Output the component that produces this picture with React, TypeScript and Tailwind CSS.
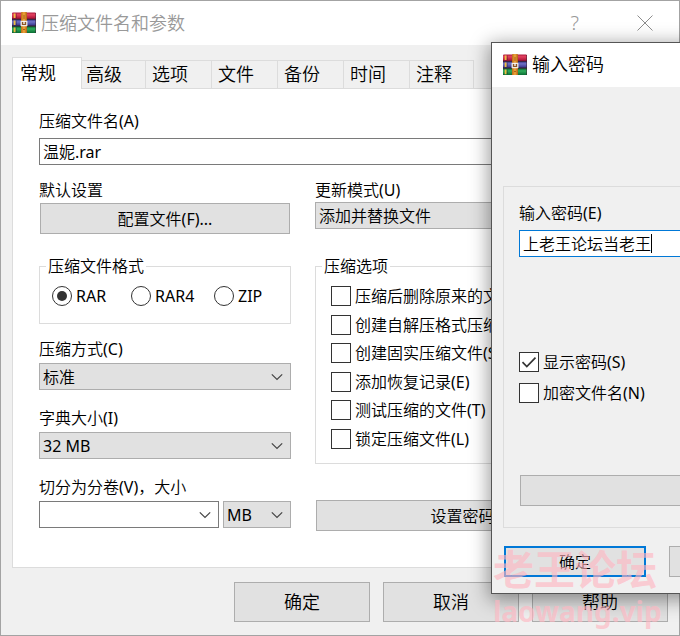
import React from 'react';

const ArchiveIcon: React.FC = () => (
  <svg className="h-[22px] w-6 shrink-0" viewBox="0 0 24 22" aria-hidden="true">
    <defs>
      <linearGradient id="red" x1="0" y1="0" x2="0" y2="1">
        <stop offset="0" stopColor="#b01c40" />
        <stop offset="0.35" stopColor="#e2405f" />
        <stop offset="1" stopColor="#a80f35" />
      </linearGradient>
      <linearGradient id="blue" x1="0" y1="0" x2="0" y2="1">
        <stop offset="0" stopColor="#3d3c8c" />
        <stop offset="0.35" stopColor="#6f72c6" />
        <stop offset="1" stopColor="#37368c" />
      </linearGradient>
      <linearGradient id="green" x1="0" y1="0" x2="0" y2="1">
        <stop offset="0" stopColor="#0d6a35" />
        <stop offset="0.35" stopColor="#2fae5c" />
        <stop offset="1" stopColor="#0a6c34" />
      </linearGradient>
      <linearGradient id="belt" x1="0" y1="0" x2="1" y2="0">
        <stop offset="0" stopColor="#bb6c18" />
        <stop offset="0.5" stopColor="#f0a63a" />
        <stop offset="1" stopColor="#b06114" />
      </linearGradient>
    </defs>
    <path d="M1 1h23v20H0V2z" fill="#3a2030" />
    <path d="M1 0.5h22.5v6.2H1Q0 6.7 0 5.7V1.5Q0 0.5 1 0.5z" fill="url(#red)" />
    <path d="M1 7.7h22.5v5.8H1Q0 13.5 0 12.5V8.7Q0 7.7 1 7.7z" fill="url(#blue)" />
    <path d="M1 14.6h22.5V21H1Q0 21 0 20v-4.4Q0 14.6 1 14.6z" fill="url(#green)" />
    <path d="M2.6 1.5v4.6M2.6 8.5V13M2.6 15.6v4.6" stroke="#f0bd3e" strokeWidth="1.8" />
    <path d="M4.4 1.5v4.6M4.4 8.5V13M4.4 15.6v4.6" stroke="#2a1420" strokeOpacity="0.5" strokeWidth="0.7" />
    <path d="M9 1.2Q9 0 10 0h4Q15 0 15 1.2V21H9z" fill="url(#belt)" />
    <path d="M9.2 9.4h5.6v4.2H9.2z" fill="#8c5526" stroke="#efece6" strokeWidth="1.3" strokeLinejoin="round" />
    <path d="M12 9v3" stroke="#ffffff" strokeWidth="1.3" />
    <path d="M11 4h2M11 6h2M11 17.5h2" stroke="#8c4a10" strokeWidth="0.7" />
  </svg>
);

const Chevron: React.FC = () => (
  <svg className="h-2 w-3" viewBox="0 0 12 8" fill="none" aria-hidden="true">
    <path d="M0.8 1.3 6 6.5l5.2-5.2" stroke="#444444" strokeWidth="1.2" />
  </svg>
);

interface SelectProps {
  id: string;
  value: string;
  className?: string;
}

const Select: React.FC<SelectProps> = ({ id, value, className = 'w-full' }) => (
  <div className={`relative ${className}`}>
    <select
      id={id}
      aria-label={value}
      className="block h-[27px] w-full appearance-none border border-[#adadad] bg-[#e1e1e1] pl-[3px] leading-6 outline-none"
    >
      <option>{value}</option>
    </select>
    <span className="pointer-events-none absolute inset-y-0 right-2 flex items-center">
      <Chevron />
    </span>
  </div>
);

interface CheckProps {
  label: string;
  checked?: boolean;
}

const CheckBox: React.FC<CheckProps> = ({ label, checked }) => (
  <label className="flex h-5 items-center gap-1 whitespace-nowrap">
    <span className="relative size-5 shrink-0">
      <input
        type="checkbox"
        defaultChecked={checked}
        className="peer block size-5 appearance-none border border-[#333333] bg-white"
      />
      <svg
        className="pointer-events-none absolute inset-0 hidden size-5 peer-checked:block"
        viewBox="0 0 20 20"
        fill="none"
        aria-hidden="true"
      >
        <path d="M3.5 10.2 7.8 14.5 16.5 5.6" stroke="#333333" strokeWidth="1.7" />
      </svg>
    </span>
    {label}
  </label>
);

const Radio: React.FC<CheckProps> = ({ label, checked }) => (
  <label className="flex h-5 items-center gap-1">
    <input
      type="radio"
      name="format"
      defaultChecked={checked}
      className="flex size-5 shrink-0 appearance-none items-center justify-center rounded-full border border-[#333333] bg-white before:size-2.5 before:rounded-full checked:before:bg-[#333333]"
    />
    {label}
  </label>
);

const tabs = ['高级', '选项', '文件', '备份', '时间', '注释'];

const archiveOptions = [
  '压缩后删除原来的文件(D)',
  '创建自解压格式压缩文件(X)',
  '创建固实压缩文件(S)',
  '添加恢复记录(E)',
  '测试压缩的文件(T)',
  '锁定压缩文件(L)',
];

const GeneralPanel: React.FC = () => (
  <div className="border border-[#dcdcdc] bg-white px-[26px] pt-5 pb-9">
    <label htmlFor="name" className="block">压缩文件名(A)</label>
    <input
      id="name"
      defaultValue="温妮.rar"
      className="mt-[5px] block h-[27px] w-full border border-[#7a7a7a] bg-white pb-0.5 pl-[3px] outline-none"
    />

    <div className="mt-[13px] grid grid-cols-[252px_1fr] gap-x-6">
      <div className="flex flex-col">
        <span>默认设置</span>
        <button className="mx-px mt-px h-[31px] border border-[#adadad] bg-[#e1e1e1]">配置文件(F)...</button>

        <fieldset className="mt-5 h-[70px] border border-[#dcdcdc]">
          <legend className="ml-1.5 px-0.5">压缩文件格式</legend>
          <div className="grid grid-cols-[79px_83px_auto] pt-2 pl-3">
            <Radio label="RAR" checked />
            <Radio label="RAR4" />
            <Radio label="ZIP" />
          </div>
        </fieldset>

        <div className="mt-[13px] flex flex-col gap-4">
          <div className="flex flex-col gap-0.5">
            <label htmlFor="method">压缩方式(C)</label>
            <Select id="method" value="标准" />
          </div>
          <div className="flex flex-col gap-0.5">
            <label htmlFor="dictionary">字典大小(I)</label>
            <Select id="dictionary" value="32 MB" />
          </div>
          <div className="flex flex-col gap-0.5">
            <label htmlFor="volume">切分为分卷(V)，大小</label>
            <div className="flex gap-1">
              <div className="flex h-[27px] flex-1 items-center border border-[#7a7a7a] bg-white">
                <input id="volume" className="h-full w-full min-w-0 pl-[3px] outline-none" />
                <button aria-label="展开" className="px-[7px]"><Chevron /></button>
              </div>
              <Select id="unit" value="MB" className="w-[68px]" />
            </div>
          </div>
        </div>
      </div>

      <div className="flex flex-col">
        <label htmlFor="update">更新模式(U)</label>
        <Select id="update" value="添加并替换文件" />

        <fieldset className="mt-[25px] h-[210px] min-w-0 border border-[#dcdcdc]">
          <legend className="ml-1.5 px-0.5">压缩选项</legend>
          <div className="flex h-[171px] flex-col justify-between pt-2 pl-[15px]">
            {archiveOptions.map((option) => (
              <CheckBox key={option} label={option} />
            ))}
          </div>
        </fieldset>

        <button className="mt-9 ml-px h-[31px] border border-[#adadad] bg-[#e1e1e1]">设置密码(P)...</button>
      </div>
    </div>
  </div>
);

const PasswordDialog: React.FC = () => (
  <div
    role="dialog"
    aria-label="输入密码"
    className="absolute top-[42px] left-[491px] w-[498px] border border-[#555555] bg-[#f0f0f0] shadow-[0_4px_18px_2px_rgba(0,0,0,0.4)]"
  >
    <div className="flex h-11 items-center gap-[5px] bg-white pl-[11px] text-lg">
      <ArchiveIcon />
      <h2 className="pb-0.5">输入密码</h2>
    </div>
    <div className="px-[11px] pt-[99px] pb-4">
      <div className="flex flex-col border border-[#dcdcdc] pt-3.5 pr-4 pb-[21px] pl-[15px]">
        <label htmlFor="password">输入密码(E)</label>
        <div className="mt-[5px] flex h-[27px] items-center border border-[#0078d7] bg-white pl-[3px]">
          <input id="password" defaultValue="上老王论坛当老王" className="h-full w-[8em] pb-0.5 outline-none" />
          <span className="h-[19px] w-px bg-black" />
        </div>
        <div className="mt-[95px] flex flex-col gap-[11px]">
          <CheckBox label="显示密码(S)" checked />
          <CheckBox label="加密文件名(N)" />
        </div>
        <button aria-label="整理密码" className="mt-[72px] ml-px h-[31px] border border-[#adadad] bg-[#e1e1e1]" />
      </div>
      <div className="mt-[18px] flex gap-[23px] pl-px">
        <button className="h-[31px] w-[142px] border-2 border-[#0078d7] bg-[#e1e1e1]">确定</button>
        <button aria-label="取消" className="h-[31px] w-[142px] border border-[#adadad] bg-[#e1e1e1]" />
      </div>
    </div>
  </div>
);

const App: React.FC = () => {
  return (
    <div className="relative min-h-screen overflow-hidden bg-[#f0f0f0] font-['Noto_Sans','Noto_Sans_CJK_SC_DemiLight','Noto_Sans_CJK_SC',sans-serif] text-base leading-6 text-black">
      <div className="flex min-h-screen flex-col border border-[#a3a3a3]">
        <header className="flex h-11 items-center gap-[5px] bg-white pr-[26px] pl-[11px] text-lg text-[#999999]">
          <ArchiveIcon />
          <h1 className="flex-1">压缩文件名和参数</h1>
          <button aria-label="帮助" className="mr-[53px] text-xl font-light">?</button>
          <button aria-label="关闭">
            <svg className="size-4" viewBox="0 0 16 16" fill="none" aria-hidden="true">
              <path d="M0.5 0.5l15 15M15.5 0.5l-15 15" stroke="#8c8c8c" strokeWidth="1" />
            </svg>
          </button>
        </header>

        <main className="px-[11px] pt-3">
          <div role="tablist" className="flex items-end text-lg">
            <button
              role="tab"
              aria-selected="true"
              className="relative -mb-px h-8 w-[70px] border border-b-0 border-[#dcdcdc] bg-white pb-0.5 pl-[7px] text-left leading-7"
            >
              常规
            </button>
            {tabs.map((tab) => (
              <button
                key={tab}
                role="tab"
                aria-selected="false"
                className="h-7 w-[66px] border-t border-r border-[#dcdcdc] pb-0.5 pl-1.5 text-left leading-6 nth-2:w-16 nth-2:pl-1 last:w-16"
              >
                {tab}
              </button>
            ))}
          </div>
          <GeneralPanel />
        </main>

        <footer className="flex justify-end gap-[13px] px-[11px] pt-3.5 pb-[13px] text-lg">
          <button className="h-10 w-[136px] border border-[#adadad] bg-[#e1e1e1]">确定</button>
          <button className="h-10 w-[136px] border border-[#adadad] bg-[#e1e1e1]">取消</button>
          <button className="h-10 w-[136px] border border-[#adadad] bg-[#e1e1e1]">帮助</button>
        </footer>
      </div>

      <PasswordDialog />

      <div className="pointer-events-none absolute top-[547px] left-[493px] font-['Noto_Sans','Noto_Sans_CJK_SC',sans-serif] font-bold whitespace-nowrap text-[#ffb6c1]/65">
        <p className="text-[41px] leading-11">老王论坛</p>
        <p className="text-[28px] leading-10">laowang.vip</p>
      </div>
    </div>
  );
};

export default App;
